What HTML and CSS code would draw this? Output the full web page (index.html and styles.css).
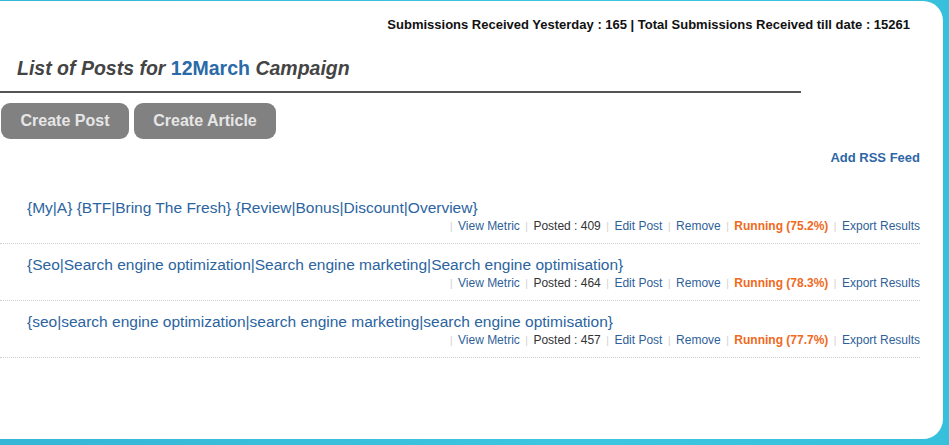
FILE: index.html
```html
<!DOCTYPE html>
<html>
<head>
<meta charset="utf-8">
<link rel="stylesheet" href="styles.css">
</head>
<body>
<div class="panel">
  <div class="stats">Submissions Received Yesterday : 165 | Total Submissions Received till date : 15261</div>
  <h2 class="title">List of Posts for <span class="camp">12March</span> Campaign</h2>
  <div class="rule"></div>
  <div class="buttons">
    <a class="btn">Create Post</a>
    <a class="btn">Create Article</a>
  </div>
  <div class="list">
    <div class="rss"><a>Add RSS Feed</a></div>
    <div class="row">
      <div class="ptitle">{My|A} {BTF|Bring The Fresh} {Review|Bonus|Discount|Overview}</div>
      <div class="actions"><span class="sep">|</span><a>View Metric</a><span class="sep">|</span><span class="posted">Posted : 409</span><span class="sep">|</span><a>Edit Post</a><span class="sep">|</span><a>Remove</a><span class="sep">|</span><span class="run">Running (75.2%)</span><span class="sep">|</span><a>Export Results</a></div>
    </div>
    <div class="row">
      <div class="ptitle">{Seo|Search engine optimization|Search engine marketing|Search engine optimisation}</div>
      <div class="actions"><span class="sep">|</span><a>View Metric</a><span class="sep">|</span><span class="posted">Posted : 464</span><span class="sep">|</span><a>Edit Post</a><span class="sep">|</span><a>Remove</a><span class="sep">|</span><span class="run">Running (78.3%)</span><span class="sep">|</span><a>Export Results</a></div>
    </div>
    <div class="row">
      <div class="ptitle">{seo|search engine optimization|search engine marketing|search engine optimisation}</div>
      <div class="actions"><span class="sep">|</span><a>View Metric</a><span class="sep">|</span><span class="posted">Posted : 457</span><span class="sep">|</span><a>Edit Post</a><span class="sep">|</span><a>Remove</a><span class="sep">|</span><span class="run">Running (77.7%)</span><span class="sep">|</span><a>Export Results</a></div>
    </div>
  </div>
</div>
</body>
</html>
```
FILE: styles.css
```css
html, body {
  margin: 0;
  padding: 0;
}
body {
  background: linear-gradient(90deg, #35b6d6 0%, #3cc6e0 60%, #37c0dc 100%);
  font-family: "Liberation Sans", Arial, sans-serif;
  height: 445px;
  overflow: hidden;
}
.panel {
  background: #ffffff;
  margin: 1px 6px 0 0;
  height: 438px;
  border-radius: 0 20px 20px 0;
  box-sizing: border-box;
  padding-top: 16px;
}
.stats {
  font-size: 13px;
  line-height: 15px;
  font-weight: bold;
  color: #111;
  text-align: right;
  padding-right: 33px;
}
.title {
  margin: 24px 0 0 17px;
  font-size: 19.5px;
  line-height: 24px;
  font-style: italic;
  font-weight: bold;
  color: #444;
}
.camp {
  font-style: normal;
  color: #2b6aa8;
}
.rule {
  margin-top: 11px;
  width: 801px;
  height: 2px;
  background: #555;
}
.buttons {
  display: flex;
  gap: 5px;
  margin-top: 10px;
  padding-left: 1px;
}
.btn {
  display: flex;
  align-items: center;
  justify-content: center;
  height: 36px;
  background: #818181;
  color: #e6e6e6;
  font-size: 16px;
  font-weight: bold;
  border-radius: 9px;
}
.btn:first-child { width: 128px; }
.btn:last-child { width: 142px; }
.list {
  padding-right: 23px;
}
.rss {
  text-align: right;
  margin-top: 11px;
  font-size: 13px;
  line-height: 15px;
  font-weight: bold;
  color: #2e66a6;
}
.row {
  padding: 11px 0 8px 27px;
  border-bottom: 1px dotted #cfcfcf;
}
.rss + .row {
  padding-top: 33px;
}
.ptitle {
  font-size: 15.5px;
  line-height: 20px;
  color: #2b64a0;
}
.actions {
  text-align: right;
  font-size: 12px;
  line-height: 16px;
  color: #2f5f99;
}
.sep {
  color: #d0d0d0;
  font-size: 10px;
  margin: 0 5.5px;
}
.posted {
  color: #333;
}
.run {
  color: #f0691c;
  font-weight: bold;
}
```
